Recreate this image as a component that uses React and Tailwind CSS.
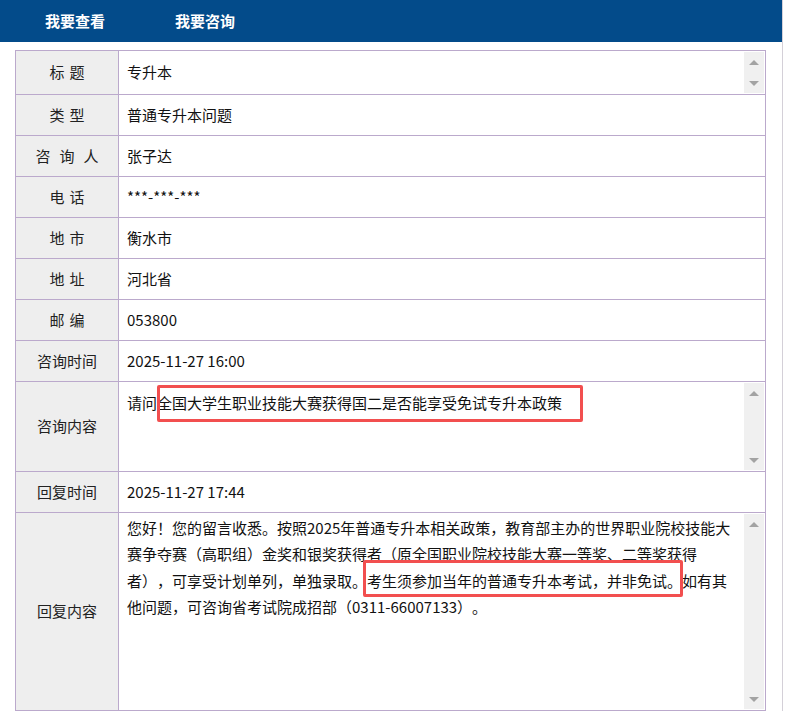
import React from "react";

const font = { fontFamily: '"Noto Sans CJK SC", "Noto Sans", sans-serif' };

const ScrollBar = () => (
  <div className="flex w-[20px] shrink-0 flex-col items-center justify-between bg-[#f0f0f0] pt-[8px] pb-[7px]">
    <div className="h-0 w-0 border-x-[5px] border-b-[5px] border-x-transparent border-b-[#a3a3a3]" />
    <div className="h-0 w-0 border-x-[5px] border-t-[5px] border-x-transparent border-t-[#a3a3a3]" />
  </div>
);

const Label = ({ chars, gap }) => (
  <div className="flex items-center justify-center border-r border-[#bba9cc] bg-[#eeeeee] text-[15px] text-[#222]">
    <span className={`flex ${gap}`}>
      {chars.map((c, i) => (
        <span key={i}>{c}</span>
      ))}
    </span>
  </div>
);

const Row = ({ label, gap = "gap-0", height = "h-[41px]", children }) => (
  <div className={`grid grid-cols-[103px_1fr] border-b border-[#bba9cc] ${height}`}>
    <Label chars={label} gap={gap} />
    {children}
  </div>
);

const Plain = ({ children }) => (
  <div className="flex items-center pl-[8px] text-[15px] text-[#111]">{children}</div>
);

const reply = [
  "您好！您的留言收悉。按照2025年普通专升本相关政策，教育部主办的世界职业院校技能大",
  "赛争夺赛（高职组）金奖和银奖获得者（原全国职业院校技能大赛一等奖、二等奖获得",
  "者），可享受计划单列，单独录取。考生须参加当年的普通专升本考试，并非免试。如有其",
  "他问题，可咨询省考试院成招部（0311-66007133）。",
];

export default function App() {
  return (
    <div
      className="relative h-[711px] w-[783px] border-r border-[#d4d0d8] bg-white [text-spacing-trim:space-all]"
      style={font}
    >
      <div className="flex h-[42px] items-center bg-[#034b8a] pl-[45px] text-[15px] font-bold text-white">
        <span>我要查看</span>
        <span className="ml-[70px]">我要咨询</span>
      </div>

      <div className="ml-[15px] mt-[8px] w-[751px] border-l border-r border-t border-[#bba9cc]">
        <Row label={["标", "题"]} gap="gap-[5px]" height="h-[44px]">
          <div className="flex p-[1px]">
            <div className="flex flex-1 items-center pl-[7px] text-[15px] text-[#111]">专升本</div>
            <ScrollBar />
          </div>
        </Row>
        <Row label={["类", "型"]} gap="gap-[5px]">
          <Plain>普通专升本问题</Plain>
        </Row>
        <Row label={["咨", "询", "人"]} gap="gap-[9px]">
          <Plain>张子达</Plain>
        </Row>
        <Row label={["电", "话"]} gap="gap-[5px]">
          <Plain>***-***-***</Plain>
        </Row>
        <Row label={["地", "市"]} gap="gap-[5px]">
          <Plain>衡水市</Plain>
        </Row>
        <Row label={["地", "址"]} gap="gap-[5px]">
          <Plain>河北省</Plain>
        </Row>
        <Row label={["邮", "编"]} gap="gap-[5px]">
          <Plain>053800</Plain>
        </Row>
        <Row label={["咨询时间"]}>
          <Plain>2025-11-27 16:00</Plain>
        </Row>
        <Row label={["咨询内容"]} height="h-[90px]">
          <div className="flex p-[1px]">
            <div className="flex-1 pl-[7px] pt-[9px] text-[15px] leading-[22px] text-[#111]">
              请问全国大学生职业技能大赛获得国二是否能享受免试专升本政策
            </div>
            <ScrollBar />
          </div>
        </Row>
        <Row label={["回复时间"]}>
          <Plain>2025-11-27 17:44</Plain>
        </Row>
        <Row label={["回复内容"]} height="h-[198px]">
          <div className="flex p-[1px]">
            <div className="flex-1 pl-[7px] pt-[1px] text-[15px] leading-[26.3px] text-[#111]">
              {reply.map((line, i) => (
                <div key={i} className="whitespace-nowrap">
                  {line}
                </div>
              ))}
            </div>
            <ScrollBar />
          </div>
        </Row>
      </div>

      <div className="absolute left-[157px] top-[385px] h-[37px] w-[426px] rounded-[2px] border-[3px] border-[#f24f4f]" />
      <div className="absolute left-[363px] top-[560px] h-[37px] w-[320px] rounded-[2px] border-[3px] border-[#f24f4f]" />
    </div>
  );
}
